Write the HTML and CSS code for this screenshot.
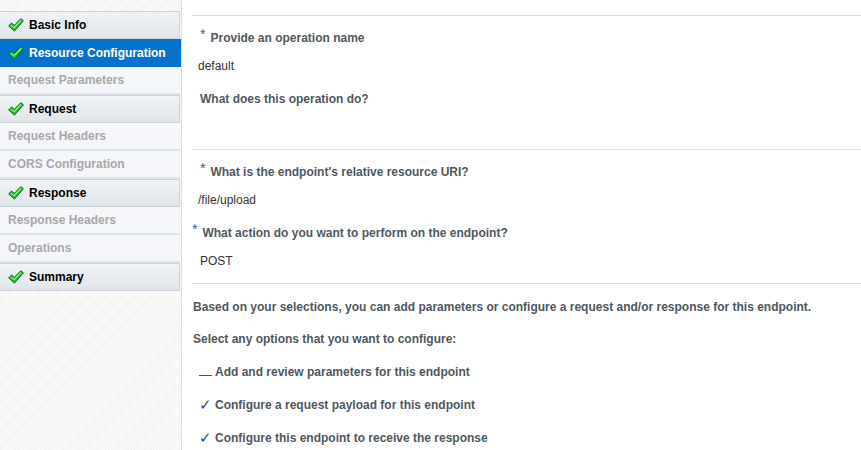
FILE: index.html
```html
<!DOCTYPE html>
<html lang="en">

<head>
    <meta charset="UTF-8">
    <title>Resource Configuration</title>
    <link rel="stylesheet" href="styles.css">
</head>

<body>
    <svg class="defs" width="0" height="0">
        <symbol id="tick" viewBox="0 0 16 14">
            <path d="M0.7 7.8 L3.6 5 L6.3 7.4 L12.8 0.7 L15.4 2.8 L6.4 13.2 Z" fill="#25c02f" stroke="#0a6d1c" stroke-width="1" stroke-linejoin="round"/>
            <path d="M2.6 7.4 L6.3 9.6 L13 2.4" fill="none" stroke="#9df29a" stroke-width="1.1"/>
        </symbol>
    </svg>

    <div class="train">
        <div class="step done"><svg class="tick"><use href="#tick"/></svg>Basic Info</div>
        <div class="step done selected"><svg class="tick"><use href="#tick"/></svg>Resource Configuration</div>
        <div class="step off">Request Parameters</div>
        <div class="step done"><svg class="tick"><use href="#tick"/></svg>Request</div>
        <div class="step off">Request Headers</div>
        <div class="step off">CORS Configuration</div>
        <div class="step done"><svg class="tick"><use href="#tick"/></svg>Response</div>
        <div class="step off">Response Headers</div>
        <div class="step off">Operations</div>
        <div class="step done"><svg class="tick"><use href="#tick"/></svg>Summary</div>
    </div>

    <div class="main">
        <section class="block first">
            <div class="label"><span class="req">*</span>Provide an operation name</div>
            <div class="value">default</div>
            <div class="label plain">What does this operation do?</div>
        </section>
        <section class="block second">
            <div class="label"><span class="req">*</span>What is the endpoint's relative resource URI?</div>
            <div class="value">/file/upload</div>
            <div class="label action"><span class="req">*</span>What action do you want to perform on the endpoint?</div>
            <div class="value post">POST</div>
        </section>
        <section class="block third">
            <p>Based on your selections, you can add parameters or configure a request and/or response for this endpoint.</p>
            <p class="prompt">Select any options that you want to configure:</p>
            <div class="option"><span class="mark blank"></span>Add and review parameters for this endpoint</div>
            <div class="option"><span class="mark">&#10003;</span>Configure a request payload for this endpoint</div>
            <div class="option"><span class="mark">&#10003;</span>Configure this endpoint to receive the response</div>
        </section>
    </div>
</body>

</html>
```
FILE: styles.css
```css
* {
    margin: 0;
    padding: 0;
    box-sizing: border-box;
}

body {
    font-family: 'Liberation Sans', Arial, sans-serif;
    font-size: 12px;
    font-weight: bold;
    color: #4f5860;
    background: white;
    display: flex;
    height: 450px;
    overflow: hidden;
}

.defs {
    position: absolute;
}

.train {
    width: 182px;
    flex-shrink: 0;
    padding-top: 11px;
    border-right: 1px solid #d6dfe6;
    background: repeating-linear-gradient(135deg, #f3f3f3 0 1px, #fbfbfb 1px 2px);
}

.step {
    height: 28px;
    padding-left: 8px;
    margin-right: 1px;
    display: flex;
    align-items: center;
    border-bottom: 2px solid #dfe4ea;
    background: #f4f6f9;
}

.step.off {
    color: #a8a8a8;
}

.step.done {
    color: black;
    background: linear-gradient(#f0f2f4, #e2e6ea);
    border: 1px solid #c9d3dc;
    border-left: 0;
}

.step.selected {
    color: white;
    background: #0572ce;
    border-color: #0572ce;
    margin-right: 0;
}

.tick {
    width: 16px;
    height: 14px;
    margin-right: 5px;
}

.main {
    flex: 1;
    padding: 15px 0 0 10px;
}

.block {
    border-top: 1px solid #d6dfe6;
}

.first {
    height: 134px;
    padding-top: 13px;
}

.second {
    height: 134px;
    padding-top: 13px;
}

.third {
    padding-top: 15px;
}

.label {
    padding-left: 8px;
    line-height: 16px;
}

.req {
    color: #1d64b0;
    font-weight: normal;
    font-size: 14px;
    margin-right: 5px;
    position: relative;
    top: -3px;
}

.label.plain {
    margin-top: 17px;
}

.label.action {
    padding-left: 0;
    margin-top: 16px;
}

.value {
    font-weight: normal;
    color: #333;
    padding-left: 6px;
    margin-top: 12px;
    line-height: 16px;
}

.value.post {
    padding-left: 8px;
}

.third p {
    margin-bottom: 16px;
    padding-left: 1px;
    line-height: 16px;
}

.third p.prompt {
    margin-bottom: 8px;
}

.option {
    display: flex;
    align-items: center;
    height: 33px;
    padding-left: 7px;
}

.mark {
    width: 16px;
    color: #2a4a8a;
    font-size: 15px;
    font-weight: normal;
}

.mark.blank {
    height: 9px;
    border-bottom: 1px solid #555;
    width: 13px;
    margin-right: 3px;
}
```
